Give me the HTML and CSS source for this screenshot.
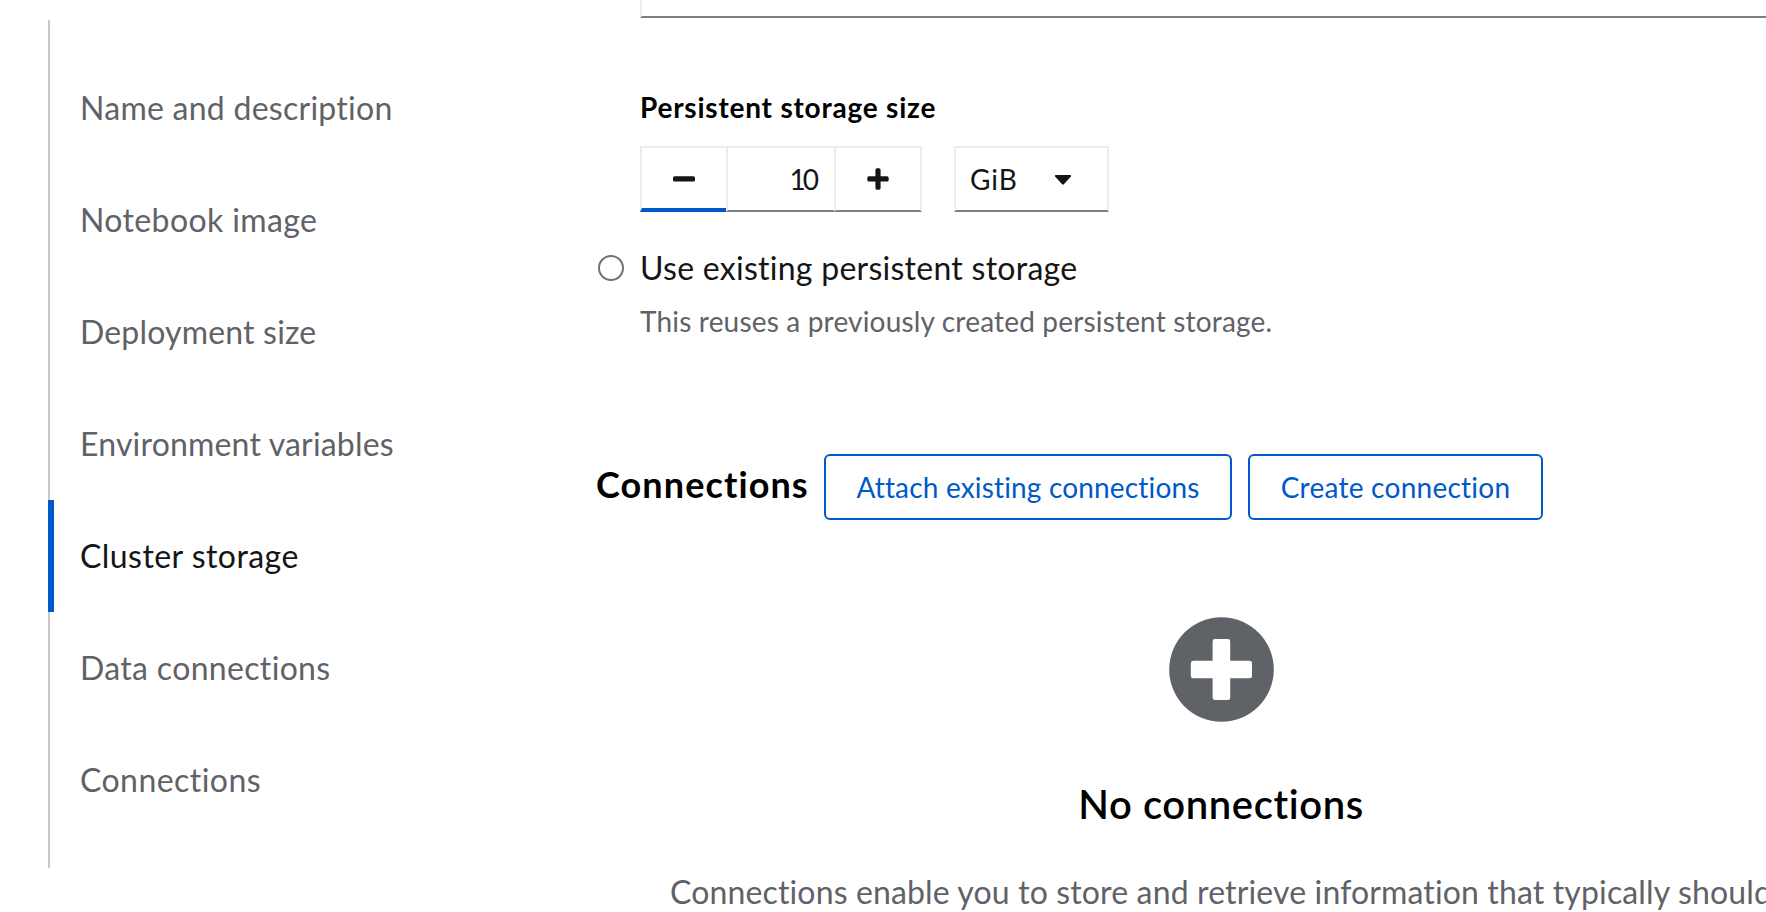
FILE: index.html
```html
<!DOCTYPE html>
<html lang="en">
<head>
<meta charset="utf-8">
<title>Create workbench</title>
<link rel="stylesheet" href="styles.css">
</head>
<body>
<div class="page">
  <nav class="jump-links">
    <a class="jump-link name"><span>Name and description</span></a>
    <a class="jump-link image"><span>Notebook image</span></a>
    <a class="jump-link"><span>Deployment size</span></a>
    <a class="jump-link"><span>Environment variables</span></a>
    <a class="jump-link active"><span>Cluster storage</span></a>
    <a class="jump-link data"><span>Data connections</span></a>
    <a class="jump-link conn"><span>Connections</span></a>
  </nav>
  <main class="content">
    <div class="field-end"></div>
    <section class="storage">
      <div class="label"><span>Persistent storage size</span></div>
      <div class="controls">
        <div class="number">
          <button class="step minus"><svg width="22" height="22" viewBox="0 0 22 22"><rect x="0" y="8.3" width="22" height="5.2" rx="1.6"/></svg></button>
          <div class="value">10</div>
          <button class="step plus"><svg width="22" height="22" viewBox="0 0 22 22"><rect x="0.3" y="8.3" width="21.4" height="5.2" rx="1.6"/><rect x="8.4" y="0.3" width="5.2" height="21.4" rx="1.6"/></svg></button>
        </div>
        <div class="select"><span>GiB</span><svg width="18" height="10" viewBox="0 0 18 10"><path d="M1.6 0H16.4Q17.6 .4 16.9 1.5L9.9 9.3Q9 10 8.1 9.3L1.1 1.5Q.4 .4 1.6 0Z"/></svg></div>
      </div>
      <div class="radio-row"><span class="radio"></span><span class="radio-label">Use existing persistent storage</span></div>
      <div class="help"><span>This reuses a previously created persistent storage.</span></div>
    </section>
    <section class="connections">
      <div class="heading">
        <h2><span>Connections</span></h2>
        <button class="btn attach"><span>Attach existing connections</span></button>
        <button class="btn create"><span>Create connection</span></button>
      </div>
      <div class="empty">
        <svg class="empty-icon" width="105" height="105" viewBox="0 0 105 105"><circle cx="52.5" cy="52.5" r="52.3" fill="#5f6267"/><path fill="#fff" d="M46 22H59Q61.200 22 61.200 24.200V43.700H80.500Q83 43.700 83 46.200V58.800Q83 61.300 80.500 61.300H61.200V80.500Q61.200 83 59 83H46Q43.600 83 43.600 80.500V61.300H24.200Q21.800 61.300 21.800 58.800V46.200Q21.800 43.700 24.200 43.700H43.600V24.200Q43.600 22 46 22Z"/></svg>
        <h3><span>No connections</span></h3>
      </div>
      <p class="blurb">Connections enable you to store and retrieve information that typically should</p>
    </section>
  </main>
</div>
</body>
</html>
```
FILE: styles.css
```css
* { box-sizing: border-box; }
body { margin: 0; background: #fff; font-family: Lato, "Open Sans", sans-serif; font-variant-ligatures: none; color: #151515; }
button { font: inherit; font-variant-ligatures: none; background: #fff; border: 0; padding: 0; border-radius: 0; }
h2, h3, p { margin: 0; }
.page { display: flex; width: 1766px; height: 912px; overflow: hidden; }
.jump-links { margin: 20px 0 0 48px; width: 548px; height: 848px; flex: none; padding-top: 32px; box-shadow: inset 2px 0 #c9c9c9; }
.jump-link { display: flex; align-items: center; height: 112px; padding: 0 0 2px 32px; font-size: 32px; letter-spacing: 0.18px; color: #5f6267; white-space: nowrap; }
.jump-link.name { letter-spacing: 0.26px; }
.jump-link.image { letter-spacing: 0.38px; }
.jump-link.data { letter-spacing: 0.33px; }
.jump-link.conn { letter-spacing: 0.45px; }
.jump-link.active { color: #151515; box-shadow: inset 6px 0 #0059c8; letter-spacing: 0.45px; }
.content { flex: 1; min-width: 0; overflow: hidden; }
.field-end { margin-left: 44px; height: 18px; border-left: 2px solid #ececec; border-bottom: 2px solid #7c8085; }
.storage { margin-left: 44px; padding-top: 66px; white-space: nowrap; }
.label { height: 46px; line-height: 46px; font-size: 28px; font-weight: 700; letter-spacing: 0.78px; color: #000; }
.controls { display: flex; gap: 32px; margin-top: 16px; }
.number { display: flex; width: 282px; height: 66px; }
.step, .value { display: flex; align-items: center; border: 2px solid #ececec; border-bottom-color: #7c8085; height: 66px; }
.step { width: 88px; justify-content: center; fill: #151515; }
.minus { border-right: 0; border-bottom: 4px solid #0059c8; padding-top: 2px; width: 86px; }
.value { width: 108px; border-right: 0; justify-content: flex-end; padding-right: 18px; font-size: 28px; letter-spacing: -3px; }
.select { display: flex; align-items: center; width: 155px; height: 66px; border: 2px solid #ececec; border-bottom-color: #7c8085; padding: 0 35px 0 14px; justify-content: space-between; font-size: 28px; letter-spacing: 0.9px; }
.select svg { margin-top: 2px; fill: #151515; }
.radio-row { display: flex; align-items: center; height: 48px; margin: 32px 0 0 -42px; font-size: 32px; letter-spacing: 0.27px; }
.radio { width: 26px; height: 26px; border: 2px solid #707070; border-radius: 50%; margin-right: 16px; }
.radio-label { padding-bottom: 2px; }
.help { height: 42px; line-height: 42px; margin-top: 8px; font-size: 28px; letter-spacing: 0.18px; color: #5f6267; }
.connections { margin-top: 112px; }
.heading { display: flex; align-items: center; height: 66px; }
h2 { width: 228px; font-size: 36px; line-height: 60px; padding-bottom: 6px; font-weight: 700; letter-spacing: 1.1px; color: #000; white-space: nowrap; }
.btn { height: 66px; border: 2px solid #0059c8; border-radius: 6px; color: #0059c8; font-size: 28px; white-space: nowrap; }
.attach { width: 408px; letter-spacing: 0.17px; }
.create { width: 295px; margin-left: 16px; letter-spacing: 0.26px; }
.empty { width: 1250px; display: flex; flex-direction: column; align-items: center; padding-top: 97px; color: #000; }
h3 { margin-top: 56px; font-size: 40px; line-height: 52px; font-weight: 600; letter-spacing: 0.6px; }
.blurb { margin: 38px 0 0 74px; font-size: 32px; line-height: 48px; font-weight: 400; letter-spacing: 0.14px; color: #5f6267; white-space: nowrap; }
```
